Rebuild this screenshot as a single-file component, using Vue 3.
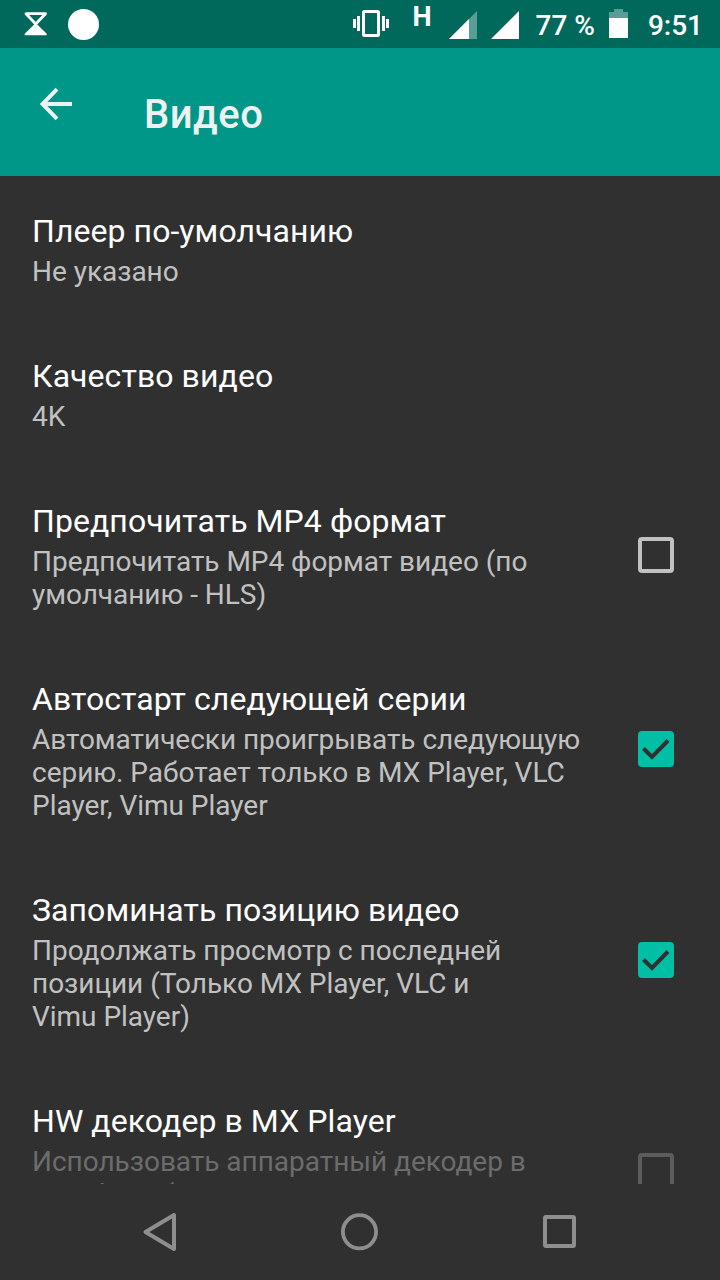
<template>
  <div class="screen">
    <header class="status-bar">
      <div class="status-left">
        <svg class="icon-hourglass" width="24" height="24" viewBox="0 0 24 24">
          <path d="M2 1.7h19.5L11.7 12z" fill="none" stroke="#fff" stroke-width="2.8" stroke-linejoin="round" />
          <path d="M11.7 11L22.7 21.8V23.3H.7V21.8z" fill="#fff" />
        </svg>
        <span class="dot"></span>
      </div>
      <div class="status-right">
        <svg class="icon-vibrate" width="36" height="28" viewBox="0 0 36 28">
          <rect x="10.5" y="2.5" width="15" height="24" rx="1" fill="none" stroke="#fff" stroke-width="3" />
          <path d="M0 10h3v9H0zM4 7h3v15H4zM29 7h3v15h-3zM33 10h3v9h-3z" fill="#fff" />
        </svg>
        <span class="network-type">H</span>
        <svg class="icon-signal" width="28" height="28" viewBox="0 0 28 28">
          <path d="M0 28L28 0V28z" fill="#fff" fill-opacity=".35" />
          <path d="M0 28L20 8V28z" fill="#fff" />
        </svg>
        <svg class="icon-signal second" width="28" height="28" viewBox="0 0 28 28">
          <path d="M0 28L28 0V28z" fill="#fff" />
        </svg>
        <span class="battery-level">77 %</span>
        <svg class="icon-battery" width="19" height="29" viewBox="0 0 19 29">
          <path d="M0 3h5V0h9v3h5v6H0z" fill="#fff" fill-opacity=".35" />
          <path d="M0 9h19v20H0z" fill="#fff" />
        </svg>
        <span class="clock">9:51</span>
      </div>
    </header>

    <div class="toolbar">
      <button class="back-btn" aria-label="Назад">
        <svg width="32" height="32" viewBox="0 0 32 32">
          <path d="M17 1.2L2.5 16L17 30.8M2.5 16H32" fill="none" stroke="#eef1f1" stroke-width="4" />
        </svg>
      </button>
      <h1>Видео</h1>
    </div>

    <main class="settings">
      <div
        v-for="item in items"
        :key="item.title"
        class="setting"
        :class="{ disabled: item.disabled }"
        @click="toggle(item)"
      >
        <div class="setting-text">
          <div class="setting-title">{{ item.title }}</div>
          <div class="setting-summary">{{ item.summary }}</div>
        </div>
        <div v-if="'checked' in item" class="checkbox" :class="{ checked: item.checked }">
          <svg v-if="item.checked" width="36" height="36" viewBox="0 0 36 36">
            <path d="M5.5 17.5L14 26L30 9.5" fill="none" stroke="#303030" stroke-width="4" />
          </svg>
        </div>
      </div>
    </main>

    <nav class="nav-bar">
      <svg width="40" height="40" viewBox="0 0 40 40">
        <path d="M34 3V37L5.5 20z" fill="none" stroke="#8e8e8e" stroke-width="4" stroke-linejoin="round" />
      </svg>
      <svg width="40" height="40" viewBox="0 0 40 40">
        <circle cx="19.5" cy="19.8" r="16.6" fill="none" stroke="#8e8e8e" stroke-width="3.8" />
      </svg>
      <svg width="40" height="40" viewBox="0 0 40 40">
        <rect x="5" y="5" width="29" height="29" rx="1" fill="none" stroke="#8e8e8e" stroke-width="4" />
      </svg>
    </nav>
  </div>
</template>

<script setup>
import { reactive } from 'vue'

const items = reactive([
  { title: 'Плеер по-умолчанию', summary: 'Не указано' },
  { title: 'Качество видео', summary: '4K' },
  {
    title: 'Предпочитать MP4 формат',
    summary: 'Предпочитать MP4 формат видео (по\nумолчанию - HLS)',
    checked: false
  },
  {
    title: 'Автостарт следующей серии',
    summary: 'Автоматически проигрывать следующую\nсерию. Работает только в MX Player, VLC\nPlayer, Vimu Player',
    checked: true
  },
  {
    title: 'Запоминать позицию видео',
    summary: 'Продолжать просмотр с последней\nпозиции (Только MX Player, VLC и\nVimu Player)',
    checked: true
  },
  {
    title: 'HW декодер в MX Player',
    summary: 'Использовать аппаратный декодер в\nMX Player (',
    checked: false,
    disabled: true
  }
])

const toggle = (item) => {
  if (item.disabled || !('checked' in item)) return
  item.checked = !item.checked
}
</script>

<style>
body {
  margin: 0;
  background: #303030;
}
</style>

<style scoped>
.screen {
  width: 720px;
  height: 1280px;
  display: flex;
  flex-direction: column;
  overflow: hidden;
  background: #303030;
  font-family: Roboto, "Noto Sans", sans-serif;
}

.status-bar {
  flex: none;
  height: 48px;
  box-sizing: border-box;
  padding: 0 17px 0 24px;
  display: flex;
  justify-content: space-between;
  background: #00695c;
  color: #fff;
}

.status-left,
.status-right {
  display: flex;
  align-items: center;
}

.dot {
  width: 31px;
  height: 31px;
  margin-left: 20px;
  border-radius: 50%;
  background: #fff;
}

.icon-vibrate {
  margin-bottom: 2px;
}

.network-type {
  align-self: flex-start;
  margin: 1px 0 0 23px;
  font-size: 27px;
  line-height: 33px;
  font-weight: 700;
}

.icon-signal {
  margin: 2px 0 0 18px;
}

.icon-signal.second {
  margin-left: 14px;
}

.battery-level {
  margin-left: 16px;
  font-size: 28px;
  font-weight: 500;
  line-height: 48px;
  padding-top: 3px;
}

.icon-battery {
  margin: 0 0 1px 14px;
}

.clock {
  margin-left: 20px;
  font-size: 28px;
  font-weight: 500;
  line-height: 48px;
  padding-top: 3px;
}

.toolbar {
  flex: none;
  height: 128px;
  display: flex;
  align-items: flex-start;
  background: #009688;
}

.back-btn {
  margin: 40px 0 0 40px;
  padding: 0;
  border: none;
  background: none;
  cursor: pointer;
  line-height: 0;
}

.toolbar h1 {
  margin: 43px 0 0 72px;
  font-size: 40px;
  line-height: 47px;
  font-weight: 500;
  letter-spacing: 0.5px;
  color: #eef1f1;
}

.settings {
  flex: none;
  height: 1008px;
  overflow: hidden;
}

.setting {
  display: flex;
  align-items: center;
  justify-content: space-between;
  box-sizing: border-box;
  padding-right: 46px;
  padding-left: 32px;
}

.setting.disabled {
  min-height: 211px;
  align-items: flex-start;
}

.setting-text {
  padding: 36px 0 33px;
}

.setting-title {
  font-size: 32px;
  line-height: 38px;
  letter-spacing: 0.07px;
  color: #fff;
}

.setting-summary {
  margin-top: 5px;
  font-size: 28px;
  line-height: 33px;
  letter-spacing: -0.03px;
  white-space: pre;
  color: #c1c1c1;
}

.checkbox {
  flex: none;
  width: 36px;
  height: 36px;
  box-sizing: border-box;
  border: 4px solid #c1c1c1;
  border-radius: 4px;
}

.checkbox.checked {
  display: flex;
  margin-bottom: 1px;
  border: none;
  background: #00bfa5;
}

.disabled .setting-summary {
  color: #6c6c6c;
}

.disabled .checkbox {
  margin-top: 87px;
  border-color: #5c5c5c;
}

.nav-bar {
  flex: none;
  height: 96px;
  display: flex;
  justify-content: center;
  align-items: center;
  gap: 160px;
}
</style>
